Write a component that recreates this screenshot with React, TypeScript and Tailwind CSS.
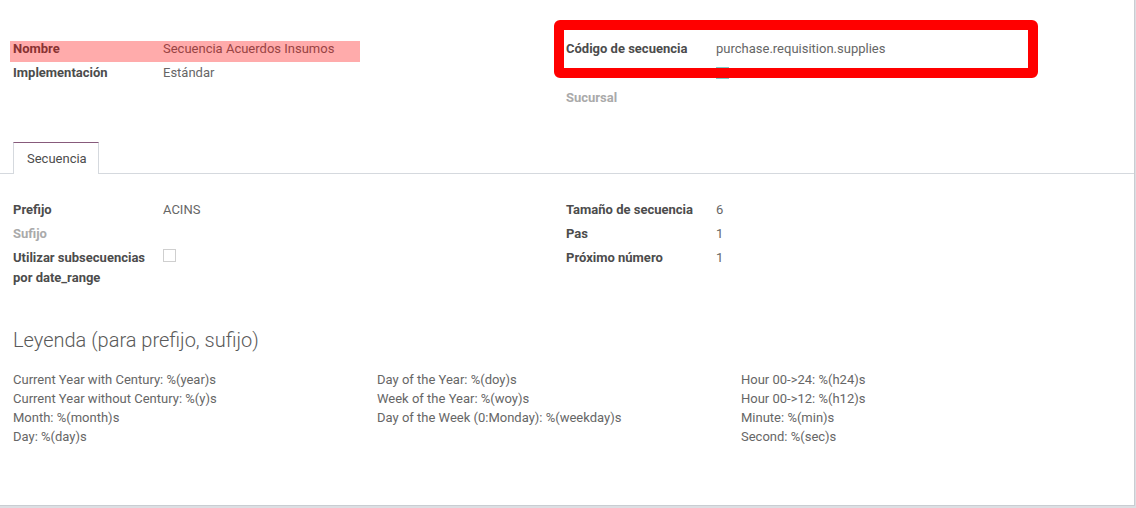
import React from "react";

interface FieldRow {
  label: React.ReactNode;
  value?: React.ReactNode;
  muted?: boolean;
  h?: string;
}

const Row: React.FC<FieldRow> = ({ label, value, muted, h }) => (
  <div className={`flex ${h ?? "h-[24px]"}`}>
    <div
      className={`w-[150px] shrink-0 py-[2px] font-bold leading-[20px] ${
        muted ? "text-[#aaaaaa]" : "text-[#4c4c4c]"
      }`}
    >
      {label}
    </div>
    <div className="py-[2px] leading-[20px] text-[#666666]">{value}</div>
  </div>
);

const Checkbox: React.FC<{ className?: string }> = ({ className }) => (
  <span className={`block border bg-white ${className ?? "mt-[1px] h-[13px] w-[13px] border-[#cfcfcf]"}`} />
);

const legend = [
  [
    "Current Year with Century: %(year)s",
    "Current Year without Century: %(y)s",
    "Month: %(month)s",
    "Day: %(day)s",
  ],
  [
    "Day of the Year: %(doy)s",
    "Week of the Year: %(woy)s",
    "Day of the Week (0:Monday): %(weekday)s",
  ],
  ["Hour 00->24: %(h24)s", "Hour 00->12: %(h12)s", "Minute: %(min)s", "Second: %(sec)s"],
];

export default function App() {
  return (
    <div
      className="h-[508px] w-[1136px] overflow-hidden bg-[#dcdfe3] text-[13px]"
      style={{ fontFamily: "Roboto, 'Noto Sans', sans-serif" }}
    >
      <div className="relative h-[506px] w-[1135px] border-r border-b border-[#c9cdd2] bg-white">
        {/* Header fields */}
        <div className="grid grid-cols-[553px_1fr] pt-[37px] pl-[13px] pr-[13px]">
          <div>
            <Row label="Nombre" value="Secuencia Acuerdos Insumos" />
            <Row label="Implementación" value="Estándar" />
          </div>
          <div>
            <Row label="Código de secuencia" value="purchase.requisition.supplies" h="h-[25px]" />
            <Row
              label="Activo"
              value={<Checkbox className="mt-[3px] h-[12px] w-[13px] border-[#7ccbc8]" />}
            />
            <Row label="Sucursal" muted />
          </div>
        </div>

        {/* Tabs */}
        <div className="mt-[32px] flex border-b border-[#d5d9de] pl-[13px]">
          <div className="-mb-px h-[32px] w-[86px] border-t border-r border-l border-t-[#875a7b] border-r-[#d5d9de] border-l-[#d5d9de] bg-white pl-[13px] pt-[6px] leading-[20px] text-[#4c4c4c]">
            Secuencia
          </div>
        </div>

        {/* Tab content */}
        <div className="grid grid-cols-[553px_1fr] pt-[24px] pl-[13px] pr-[13px]">
          <div>
            <Row label="Prefijo" value="ACINS" />
            <Row label="Sufijo" muted />
            <Row
              label={
                <>
                  Utilizar subsecuencias
                  <br />
                  por date_range
                </>
              }
              value={<Checkbox />}
              h="h-[44px]"
            />
          </div>
          <div>
            <Row label="Tamaño de secuencia" value="6" />
            <Row label="Pas" value="1" />
            <Row label="Próximo número" value="1" />
          </div>
        </div>

        <h3 className="mt-[38px] pl-[13px] text-[20px] font-light leading-[24px] text-[#5a5a5a]">
          Leyenda (para prefijo, sufijo)
        </h3>

        <div className="mt-[18px] grid grid-cols-[364px_364px_1fr] pl-[13px] leading-[19px] text-[#666666]">
          {legend.map((col, i) => (
            <div key={i}>
              {col.map((line) => (
                <div key={line}>{line}</div>
              ))}
            </div>
          ))}
        </div>

        {/* Annotation overlays */}
        <div className="pointer-events-none absolute top-[41px] left-[10px] h-[21px] w-[350px] bg-[rgba(255,0,0,0.33)]" />
        <div className="pointer-events-none absolute top-[20px] left-[554px] h-[58px] w-[484px] rounded-[6px] border-[10px] border-[#ff0000]" />
      </div>
    </div>
  );
}
